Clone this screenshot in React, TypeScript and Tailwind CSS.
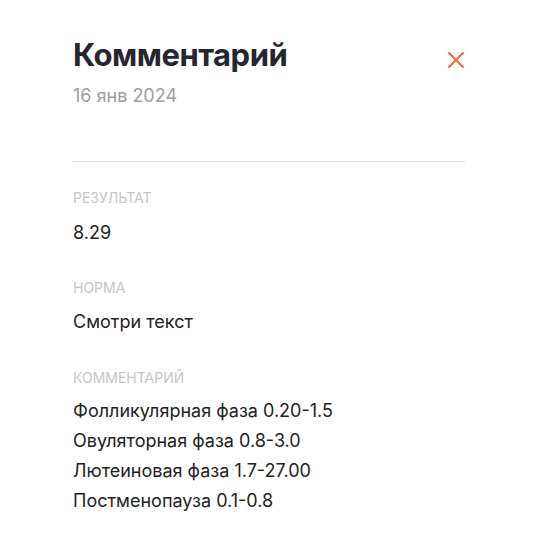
const lines = [
  "Фолликулярная фаза 0.20-1.5",
  "Овуляторная фаза 0.8-3.0",
  "Лютеиновая фаза 1.7-27.00",
  "Постменопауза 0.1-0.8",
];

function CloseIcon() {
  return (
    <svg width="18" height="18" viewBox="0 0 18 18" fill="none">
      <path d="M2 2L16 16M16 2L2 16" stroke="#e8713c" strokeWidth="2.2" strokeLinecap="round" />
    </svg>
  );
}

export default function App() {
  return (
    <div className="min-h-screen bg-white px-[73px] pt-[35px] font-['Inter','Noto_Sans',sans-serif]">
      <div className="flex items-start justify-between">
        <div>
          <h1 className="text-[31px] leading-[40px] font-bold text-[#262630] tracking-[-0.5px]">
            Комментарий
          </h1>
          <div className="mt-[9px] text-[18px] leading-[24px] text-[#9d9d9d]">16 янв 2024</div>
        </div>
        <button className="mt-[16px] p-0">
          <CloseIcon />
        </button>
      </div>

      <div className="mt-[53px] h-px bg-[#e2e2e2]" />

      <div className="mt-[26px]">
        <div className="text-[14px] leading-[20px] uppercase text-[#c5c5c5]">Результат</div>
        <div className="mt-[13px] text-[18px] leading-[24px] text-[#222]">8.29</div>
      </div>

      <div className="mt-[33px]">
        <div className="text-[14px] leading-[20px] uppercase text-[#c5c5c5]">Норма</div>
        <div className="mt-[12px] text-[18px] leading-[24px] text-[#222]">Смотри текст</div>
      </div>

      <div className="mt-[34px]">
        <div className="text-[14px] leading-[20px] uppercase text-[#c5c5c5]">Комментарий</div>
        <div className="mt-[8px] flex flex-col">
          {lines.map((l) => (
            <div key={l} className="text-[18px] leading-[30px] text-[#222]">
              {l}
            </div>
          ))}
        </div>
      </div>
    </div>
  );
}
